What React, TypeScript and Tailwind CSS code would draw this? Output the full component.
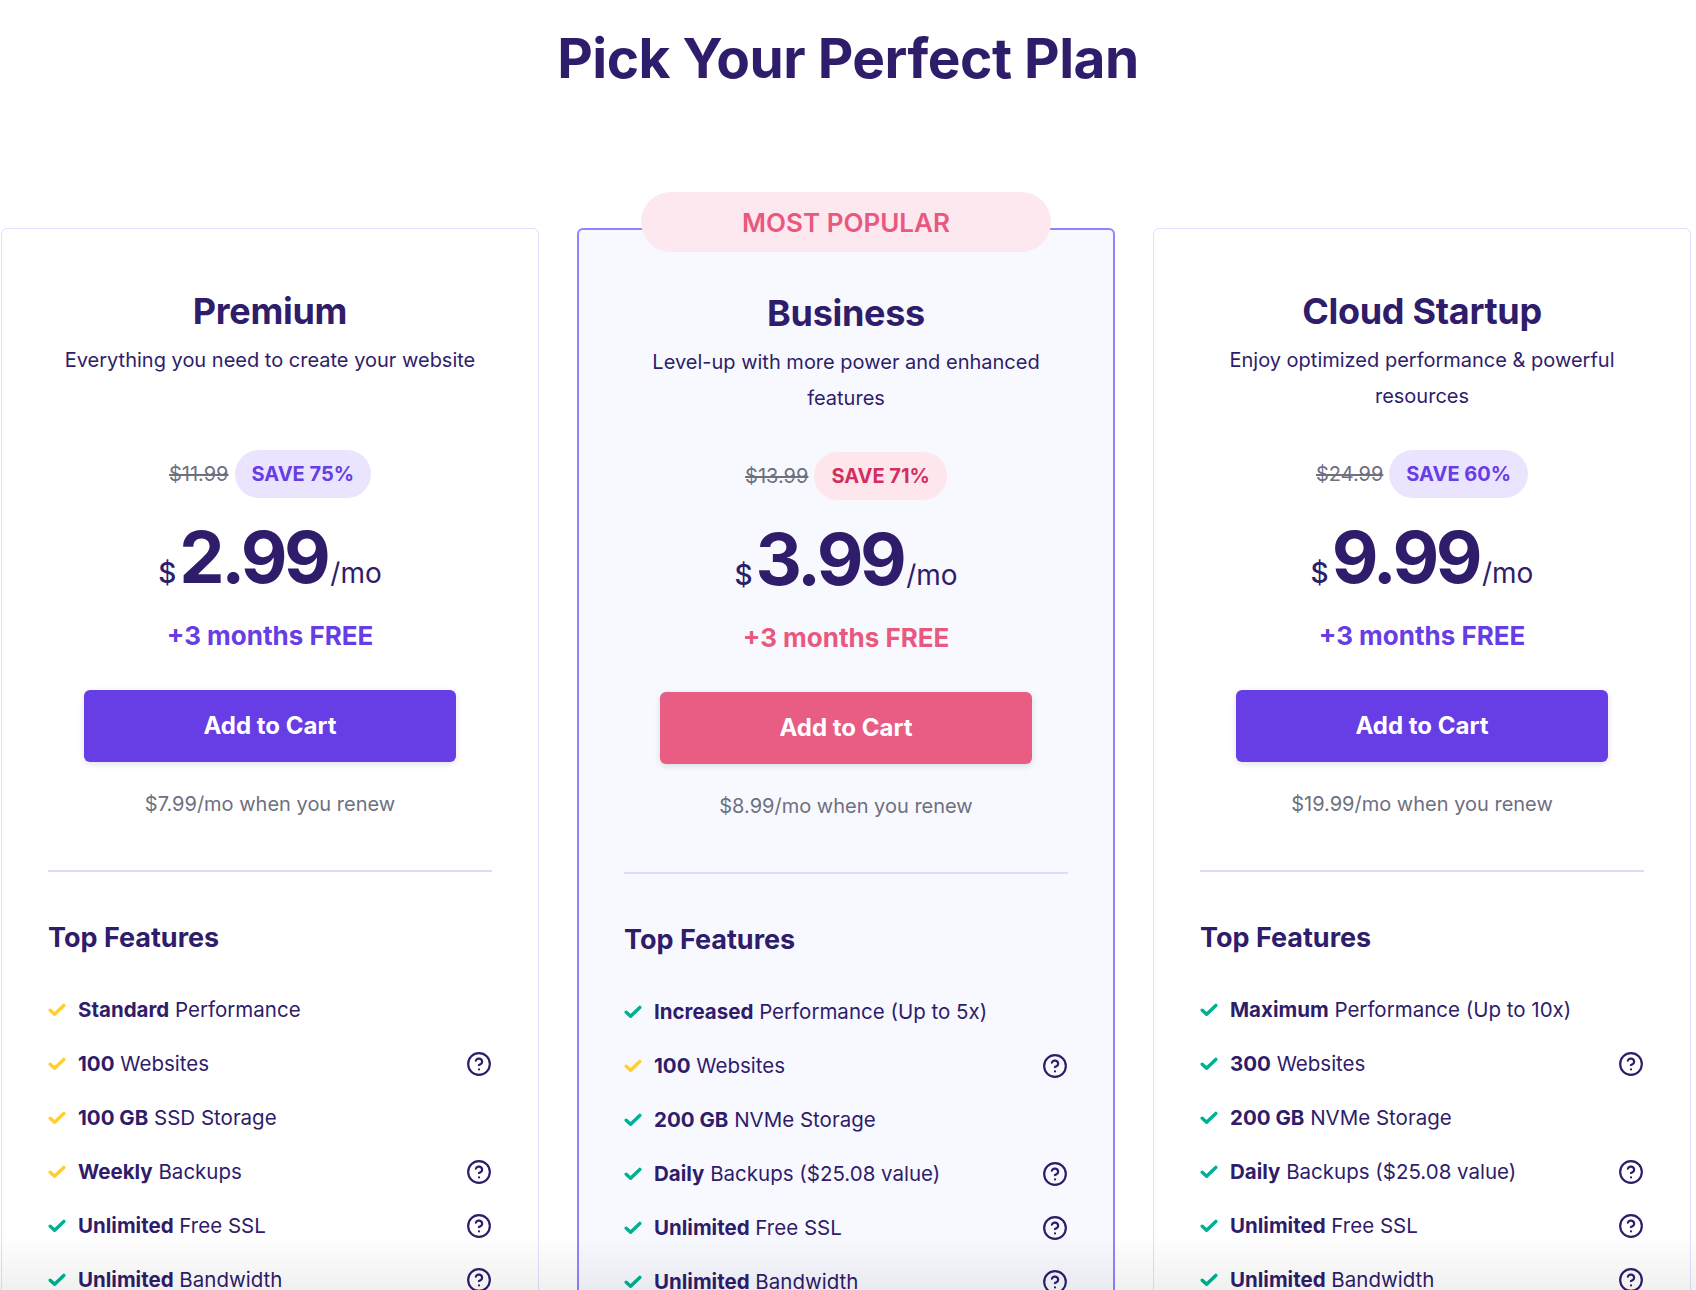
type Feature = { tone: 'yellow' | 'green'; strong: string; rest: string; help?: boolean };

type Plan = {
  name: string;
  desc: string;
  old: string;
  save: string;
  price: string;
  renew: string;
  popular?: boolean;
  features: Feature[];
};

const plans: Plan[] = [
  {
    name: 'Premium',
    desc: 'Everything you need to create your website',
    old: '$11.99',
    save: 'SAVE 75%',
    price: '2.99',
    renew: '$7.99/mo when you renew',
    features: [
      { tone: 'yellow', strong: 'Standard', rest: ' Performance' },
      { tone: 'yellow', strong: '100', rest: ' Websites', help: true },
      { tone: 'yellow', strong: '100 GB', rest: ' SSD Storage' },
      { tone: 'yellow', strong: 'Weekly', rest: ' Backups', help: true },
      { tone: 'green', strong: 'Unlimited', rest: ' Free SSL', help: true },
      { tone: 'green', strong: 'Unlimited', rest: ' Bandwidth', help: true },
    ],
  },
  {
    name: 'Business',
    desc: 'Level-up with more power and enhanced features',
    old: '$13.99',
    save: 'SAVE 71%',
    price: '3.99',
    renew: '$8.99/mo when you renew',
    popular: true,
    features: [
      { tone: 'green', strong: 'Increased', rest: ' Performance (Up to 5x)' },
      { tone: 'yellow', strong: '100', rest: ' Websites', help: true },
      { tone: 'green', strong: '200 GB', rest: ' NVMe Storage' },
      { tone: 'green', strong: 'Daily', rest: ' Backups ($25.08 value)', help: true },
      { tone: 'green', strong: 'Unlimited', rest: ' Free SSL', help: true },
      { tone: 'green', strong: 'Unlimited', rest: ' Bandwidth', help: true },
    ],
  },
  {
    name: 'Cloud Startup',
    desc: 'Enjoy optimized performance & powerful resources',
    old: '$24.99',
    save: 'SAVE 60%',
    price: '9.99',
    renew: '$19.99/mo when you renew',
    features: [
      { tone: 'green', strong: 'Maximum', rest: ' Performance (Up to 10x)' },
      { tone: 'green', strong: '300', rest: ' Websites', help: true },
      { tone: 'green', strong: '200 GB', rest: ' NVMe Storage' },
      { tone: 'green', strong: 'Daily', rest: ' Backups ($25.08 value)', help: true },
      { tone: 'green', strong: 'Unlimited', rest: ' Free SSL', help: true },
      { tone: 'green', strong: 'Unlimited', rest: ' Bandwidth', help: true },
    ],
  },
];

function Check({ tone }: { tone: 'yellow' | 'green' }) {
  return (
    <svg width="18" height="14" viewBox="0 0 18 14" className="shrink-0">
      <path
        d="M2.2 7.2 L6.6 11.2 L15.8 2.4"
        fill="none"
        stroke={tone === 'yellow' ? '#ffcd35' : '#00b090'}
        strokeWidth="3.4"
        strokeLinecap="round"
        strokeLinejoin="round"
      />
    </svg>
  );
}

function Help() {
  return (
    <svg width="26" height="26" viewBox="0 0 24 24" fill="none" stroke="#2f1c6a" strokeWidth="2" strokeLinecap="round" strokeLinejoin="round" className="shrink-0">
      <circle cx="12" cy="12" r="10" />
      <path d="M9.09 9a3 3 0 0 1 5.83 1c0 2-3 3-3 3" />
      <path d="M12 17h.01" />
    </svg>
  );
}

function PlanCard({ plan }: { plan: Plan }) {
  const pop = !!plan.popular;
  return (
    <div
      className={
        pop
          ? 'relative rounded-[6px] border-2 border-[#8c85ff] bg-[#f8f9ff] px-[45px] pt-[61px]'
          : 'relative rounded-[6px] border border-[#dde1ff] bg-white px-[46px] pt-[60px]'
      }
    >
      {pop && (
        <div className="absolute left-1/2 top-[-38px] flex h-[60px] w-[410px] -translate-x-1/2 items-center justify-center rounded-full bg-[#fce8ee] text-[26px] font-semibold text-[#e8587f]">
          MOST POPULAR
        </div>
      )}
      <h2 className="text-center text-[36px] font-bold leading-[44px] tracking-[-0.3px] text-[#2f1c6a]">{plan.name}</h2>
      <p className="mt-[9px] min-h-[72px] text-center text-[20px] leading-[36px] text-[#2f1c6a]">{plan.desc}</p>
      <div className="mt-[36px] flex items-center justify-center gap-[6px]">
        <span className="text-[20px] text-[#6d7081] line-through">{plan.old}</span>
        <span
          className={
            pop
              ? 'flex h-[48px] items-center rounded-full bg-[#fde7ed] px-[17px] text-[20px] font-bold text-[#d42e5e]'
              : 'flex h-[48px] items-center rounded-full bg-[#ebe4ff] px-[17px] text-[20px] font-bold text-[#673de6]'
          }
        >
          {plan.save}
        </span>
      </div>
      <div className="mt-[22px] flex items-baseline justify-center text-[#2f1c6a]">
        <span className="mr-[3px] text-[28px] font-medium">$</span>
        <span className="text-[72px] font-bold leading-[74px] tracking-[-3.5px]">{plan.price}</span>
        <span className="ml-[3px] text-[28px]">/mo</span>
      </div>
      <div
        className={
          pop
            ? 'mt-[26px] text-center text-[26px] font-bold leading-[32px] text-[#e8587f]'
            : 'mt-[26px] text-center text-[26px] font-bold leading-[32px] text-[#673de6]'
        }
      >
        +3 months FREE
      </div>
      <div className="mt-[38px] flex justify-center">
        <button
          className={
            pop
              ? 'h-[72px] w-[372px] rounded-[6px] bg-[#e95d85] text-[24px] font-bold text-white shadow-[0_2px_6px_rgba(0,0,0,0.12)]'
              : 'h-[72px] w-[372px] rounded-[6px] bg-[#673de6] text-[24px] font-bold text-white shadow-[0_2px_6px_rgba(0,0,0,0.12)]'
          }
        >
          Add to Cart
        </button>
      </div>
      <p className="mt-[28px] text-center text-[20px] leading-[28px] text-[#6d7081]">{plan.renew}</p>
      <div className="mt-[52px] h-[2px] bg-[#dadcff]" />
      <h3 className="mt-[48px] text-[27px] font-bold leading-[36px] text-[#2f1c6a]">Top Features</h3>
      <ul className="mt-[27px] flex flex-col">
        {plan.features.map((f, i) => (
          <li key={i} className="flex h-[54px] items-center gap-[12px] text-[20.5px] text-[#2f1c6a]">
            <Check tone={f.tone} />
            <span className="flex-1">
              <span className="font-bold">{f.strong}</span>
              {f.rest}
            </span>
            {f.help && <Help />}
          </li>
        ))}
      </ul>
      <div className="h-[200px]" />
    </div>
  );
}

export default function App() {
  return (
    <div className="relative h-[1290px] w-full overflow-hidden bg-white font-['Inter',sans-serif]">
      <h1 className="pt-[26px] text-center text-[55px] font-bold leading-[64px] tracking-[-0.5px] text-[#2f1c6a]">
        Pick Your Perfect Plan
      </h1>
      <div className="mt-[138px] grid grid-cols-[538px_538px_538px] gap-[38px] pl-[1px]">
        {plans.map((p) => (
          <PlanCard key={p.name} plan={p} />
        ))}
      </div>
      <div className="pointer-events-none absolute bottom-0 left-0 right-0 h-[56px] bg-gradient-to-b from-[rgba(0,0,20,0)] to-[rgba(0,0,20,0.06)]" />
    </div>
  );
}
